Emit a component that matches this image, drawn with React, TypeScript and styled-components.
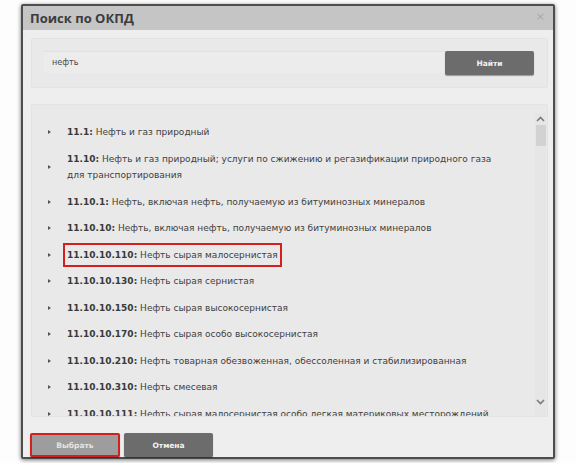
import React, { useState } from "react";
import styled, { createGlobalStyle } from "styled-components";

const GlobalStyle = createGlobalStyle`
	html, body {
		margin: 0;
		padding: 0;
		background: #fdfdfd;
	}
	* {
		box-sizing: border-box;
	}
`;

const Page = styled.div`
	width: 576px;
	height: 463px;
	padding: 4px 0 0 21px;
`;

const Dialog = styled.div`
	width: 534px;
	height: 455px;
	display: flex;
	flex-direction: column;
	border: 2px solid #4d4d4d;
	border-radius: 2px;
	background: #eeeeee;
	box-shadow: 0 1px 4px rgba(0, 0, 0, 0.55);
	font-family: "DejaVu Sans", Verdana, sans-serif;
`;

const Header = styled.div`
	height: 24px;
	display: flex;
	align-items: center;
	justify-content: space-between;
	padding: 0 8px 0 7px;
	background: #c5c5c5;
`;

const Title = styled.h1`
	margin: 0;
	font-family: "Open Sans", sans-serif;
	font-size: 13px;
	font-weight: 700;
	color: #3c3c3c;
`;

const Close = styled.span`
	font-size: 11px;
	color: #a9a9a9;
	line-height: 1;
	margin-top: -4px;
`;

const Body = styled.div`
	flex: 1;
	display: flex;
	flex-direction: column;
	gap: 16px;
	padding: 8px 5px 0 8px;
`;

const SearchPanel = styled.div`
	height: 50px;
	display: flex;
	align-items: flex-start;
	padding: 12px 13px 0 12px;
	background: #e9e9e9;
	border: 1px solid #e3e3e3;
	border-radius: 2px;
`;

const Input = styled.input`
	flex: 1;
	height: 22px;
	border: none;
	border-top: 1px solid #e2e2e2;
	background: #ececec;
	padding: 0 8px;
	font-family: "DejaVu Sans", Verdana, sans-serif;
	font-size: 8px;
	color: #444;
	outline: none;
`;

const Button = styled.button<{ $tone: "dark" | "light"; $marked?: boolean }>`
	width: ${p => (p.$marked ? "90px" : "89px")};
	height: 24px;
	border: ${p => (p.$marked ? "2px solid #d2201f" : "none")};
	border-radius: 2px;
	background: ${p => (p.$tone === "dark" ? "#6c6c6c" : "#9d9d9d")};
	color: ${p => (p.$tone === "dark" ? "#f2f2f2" : "#e4e4e4")};
	box-shadow: 0 1px 1px rgba(0, 0, 0, 0.35);
	font-family: "DejaVu Sans", Verdana, sans-serif;
	font-size: 7.5px;
	font-weight: 700;
	cursor: pointer;
`;

const ListPanel = styled.div`
	height: 313px;
	display: flex;
	background: #e9e9e9;
	border: 1px solid #e3e3e3;
	border-radius: 2px;
	overflow: hidden;
`;

const List = styled.ul`
	flex: 1;
	margin: 0;
	padding: 14px 42px 0 14px;
	list-style: none;
`;

const Row = styled.li`
	display: flex;
	align-items: center;
	padding: 5px 0;
	font-size: 9px;
	line-height: 16.5px;
	color: #404040;
	cursor: pointer;
`;

const Arrow = styled.span`
	flex: none;
	width: 0;
	height: 0;
	margin: 0 16px 0 2px;
	border-top: 2.5px solid transparent;
	border-bottom: 2.5px solid transparent;
	border-left: 3px solid #555;
`;

const Label = styled.span<{ $marked?: boolean }>`
	outline: ${p => (p.$marked ? "2px solid #d2201f" : "none")};
	outline-offset: 2px;
`;

const Code = styled.b`
	font-weight: 700;
	color: #3a3a3a;
`;

const Scrollbar = styled.div`
	width: 11px;
	margin: 8px 1px 0 0;
	display: flex;
	flex-direction: column;
	align-items: center;
	background: #e6e6e6;
`;

const ScrollArrow = styled.span`
	height: 12px;
	display: flex;
	align-items: center;
	justify-content: center;
`;

const Thumb = styled.div`
	width: 10px;
	height: 21px;
	background: #d2d2d2;
`;

const Track = styled.div<{ $fixed?: number }>`
	flex: ${p => (p.$fixed ? `0 0 ${p.$fixed}px` : "1")};
`;

const Footer = styled.div`
	display: flex;
	gap: 4px;
	padding: 11px 0 0 7px;
`;

const items: { code: string; text: string }[] = [
	{ code: "11.1", text: "Нефть и газ природный" },
	{ code: "11.10", text: "Нефть и газ природный; услуги по сжижению и регазификации природного газа для транспортирования" },
	{ code: "11.10.1", text: "Нефть, включая нефть, получаемую из битуминозных минералов" },
	{ code: "11.10.10", text: "Нефть, включая нефть, получаемую из битуминозных минералов" },
	{ code: "11.10.10.110", text: "Нефть сырая малосернистая" },
	{ code: "11.10.10.130", text: "Нефть сырая сернистая" },
	{ code: "11.10.10.150", text: "Нефть сырая высокосернистая" },
	{ code: "11.10.10.170", text: "Нефть сырая особо высокосернистая" },
	{ code: "11.10.10.210", text: "Нефть товарная обезвоженная, обессоленная и стабилизированная" },
	{ code: "11.10.10.310", text: "Нефть смесевая" },
	{ code: "11.10.10.111", text: "Нефть сырая малосернистая особо легкая материковых месторождений" },
];

const Chevron = ({ up }: { up?: boolean }) => (
	<svg width="9" height="6" viewBox="0 0 9 6">
		<path
			d={up ? "M1 5 L4.5 1.5 L8 5" : "M1 1 L4.5 4.5 L8 1"}
			fill="none"
			stroke="#7a7a7a"
			strokeWidth="1.6"
		/>
	</svg>
);

export default function App() {
	const [query, setQuery] = useState<string>("нефть");
	const [selected] = useState<string>("11.10.10.110");

	return (
		<Page>
			<GlobalStyle />
			<Dialog>
				<Header>
					<Title>Поиск по ОКПД</Title>
					<Close>×</Close>
				</Header>
				<Body>
					<SearchPanel>
						<Input value={query} onChange={e => setQuery(e.target.value)} />
						<Button $tone="dark">Найти</Button>
					</SearchPanel>
					<ListPanel>
						<List>
							{items.map(item => (
								<Row key={item.code}>
									<Arrow />
									<Label $marked={item.code === selected}>
										<Code>{item.code}:</Code> {item.text}
									</Label>
								</Row>
							))}
						</List>
						<Scrollbar>
							<ScrollArrow><Chevron up /></ScrollArrow>
							<Thumb />
							<Track />
							<ScrollArrow><Chevron /></ScrollArrow>
							<Track $fixed={8} />
						</Scrollbar>
					</ListPanel>
				</Body>
				<Footer>
					<Button $tone="light" $marked>Выбрать</Button>
					<Button $tone="dark">Отмена</Button>
				</Footer>
			</Dialog>
		</Page>
	);
}
